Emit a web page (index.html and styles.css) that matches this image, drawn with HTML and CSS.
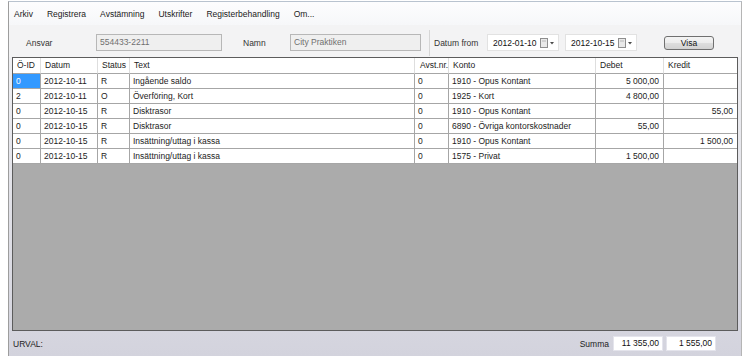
FILE: index.html
```html
<!DOCTYPE html>
<html lang="sv">
<head>
<meta charset="utf-8">
<title>Kassabok</title>
<link rel="stylesheet" href="styles.css">
</head>
<body>
<div class="window">
  <nav class="menubar">
    <span class="menu-item">Arkiv</span>
    <span class="menu-item">Registrera</span>
    <span class="menu-item">Avstämning</span>
    <span class="menu-item">Utskrifter</span>
    <span class="menu-item">Registerbehandling</span>
    <span class="menu-item">Om...</span>
  </nav>
  <div class="toolbar">
    <span class="lbl lbl-ansvar">Ansvar</span>
    <div class="field f-ansvar">554433-2211</div>
    <span class="lbl lbl-namn">Namn</span>
    <div class="field f-namn">City Praktiken</div>
    <div class="sep"></div>
    <span class="lbl lbl-datum">Datum from</span>
    <div class="date d1"><span>2012-01-10</span>
      <svg class="cal" width="15" height="10" viewBox="0 0 15 10"><rect x="0.5" y="0.5" width="7" height="9" fill="#e9e9e9" stroke="#8e8e8e"/><line x1="2" y1="3" x2="6" y2="3" stroke="#b8b8b8"/><path d="M10 4 L14 4 L12 6.5 Z" fill="#4a4a4a"/></svg>
    </div>
    <div class="date d2"><span>2012-10-15</span>
      <svg class="cal" width="15" height="10" viewBox="0 0 15 10"><rect x="0.5" y="0.5" width="7" height="9" fill="#e9e9e9" stroke="#8e8e8e"/><line x1="2" y1="3" x2="6" y2="3" stroke="#b8b8b8"/><path d="M10 4 L14 4 L12 6.5 Z" fill="#4a4a4a"/></svg>
    </div>
    <button class="btn">Visa</button>
  </div>
  <div class="content">
    <div class="grid">
      <div class="row head">
        <div class="cell">Ö-ID</div>
        <div class="cell">Datum</div>
        <div class="cell">Status</div>
        <div class="cell">Text</div>
        <div class="cell avst">Avst.nr.</div>
        <div class="cell">Konto</div>
        <div class="cell">Debet</div>
        <div class="cell">Kredit</div>
      </div>
      <div class="row">
        <div class="cell sel">0</div>
        <div class="cell">2012-10-11</div>
        <div class="cell">R</div>
        <div class="cell">Ingående saldo</div>
        <div class="cell">0</div>
        <div class="cell">1910 - Opus Kontant</div>
        <div class="cell num">5 000,00</div>
        <div class="cell num"></div>
      </div>
      <div class="row">
        <div class="cell">2</div>
        <div class="cell">2012-10-11</div>
        <div class="cell">O</div>
        <div class="cell">Överföring, Kort</div>
        <div class="cell">0</div>
        <div class="cell">1925 - Kort</div>
        <div class="cell num">4 800,00</div>
        <div class="cell num"></div>
      </div>
      <div class="row">
        <div class="cell">0</div>
        <div class="cell">2012-10-15</div>
        <div class="cell">R</div>
        <div class="cell">Disktrasor</div>
        <div class="cell">0</div>
        <div class="cell">1910 - Opus Kontant</div>
        <div class="cell num"></div>
        <div class="cell num">55,00</div>
      </div>
      <div class="row">
        <div class="cell">0</div>
        <div class="cell">2012-10-15</div>
        <div class="cell">R</div>
        <div class="cell">Disktrasor</div>
        <div class="cell">0</div>
        <div class="cell">6890 - Övriga kontorskostnader</div>
        <div class="cell num">55,00</div>
        <div class="cell num"></div>
      </div>
      <div class="row">
        <div class="cell">0</div>
        <div class="cell">2012-10-15</div>
        <div class="cell">R</div>
        <div class="cell">Insättning/uttag i kassa</div>
        <div class="cell">0</div>
        <div class="cell">1910 - Opus Kontant</div>
        <div class="cell num"></div>
        <div class="cell num">1 500,00</div>
      </div>
      <div class="row">
        <div class="cell">0</div>
        <div class="cell">2012-10-15</div>
        <div class="cell">R</div>
        <div class="cell">Insättning/uttag i kassa</div>
        <div class="cell">0</div>
        <div class="cell">1575 - Privat</div>
        <div class="cell num">1 500,00</div>
        <div class="cell num"></div>
      </div>
    </div>
  </div>
  <div class="statusbar">
    <span class="urval">URVAL:</span>
    <span class="summa">Summa</span>
    <div class="sumbox">11 355,00</div>
    <div class="sumbox">1 555,00</div>
  </div>
</div>
</body>
</html>
```
FILE: styles.css
```css
* { box-sizing: border-box; }
html, body { margin: 0; padding: 0; }
body {
  width: 745px;
  height: 356px;
  overflow: hidden;
  background: #ffffff;
  font-family: "Liberation Sans", Arial, sans-serif;
  font-size: 8.5px;
  color: #1c1c1c;
}
.window {
  margin: 1px 0 0 8px;
  width: 734px;
  height: 355px;
  border-top: 1px solid #b9c3cf;
  border-left: 1px solid #9d9d9d;
  border-right: 1px solid #b5b5b5;
  background: linear-gradient(#f5f5f6 0, #ececf0 25%, #d3d3dd 100%);
  display: flex;
  flex-direction: column;
}
.menubar {
  height: 23px;
  display: flex;
  align-items: center;
  gap: 14px;
  padding-left: 5px;
  background: linear-gradient(#fdfdfe, #f6f7f9);
}
.menu-item { color: #1a1a1a; }
.toolbar {
  height: 32px;
  display: flex;
  align-items: center;
  padding-left: 17px;
  padding-top: 3px;
  background: #f3f3f4;
}
.lbl { color: #333; }
.lbl-ansvar { width: 70px; }
.lbl-namn { width: 47px; margin-left: 21px; }
.lbl-datum { width: 53px; margin-left: 4px; }
.field {
  height: 17px;
  border: 1px solid #b7b7b7;
  background: #efefef;
  color: #707070;
  padding-left: 3px;
  line-height: 15px;
}
.f-ansvar { width: 126px; }
.f-namn { width: 131px; }
.sep {
  width: 1px;
  height: 26px;
  margin-left: 8px;
  background: #d6d6d6;
}
.date {
  width: 72px;
  height: 17px;
  display: flex;
  align-items: center;
  justify-content: space-between;
  padding: 0 3px 0 5px;
  background: #fff;
  border: 1px solid #e2e2e2;
  color: #111;
}
.d2 { margin-left: 6px; }
.cal { display: block; }
.btn {
  margin-left: 27px;
  width: 50px;
  height: 14px;
  padding: 0;
  border: 1px solid #707070;
  border-radius: 3px;
  background: linear-gradient(#f4f4f4, #ececec 50%, #dedede 50%, #d2d2d2);
  font-family: inherit;
  font-size: 8.5px;
  color: #111;
  line-height: 12px;
}
.content {
  height: 274px;
  padding: 0 3px;
}
.grid {
  width: 726px;
  height: 274px;
  border: 1px solid #5c5c5c;
  background: #ababab;
}
.row {
  display: grid;
  grid-template-columns: 28px 57px 32px 285px 34px 147px 68px 73px;
  height: 15px;
  background: #fff;
}
.row.head { height: 16px; }
.cell {
  border-right: 1px solid #a6a6a6;
  border-bottom: 1px solid #a6a6a6;
  padding: 0 3px;
  line-height: 14px;
  white-space: nowrap;
  overflow: hidden;
}
.cell:last-child { border-right: none; }
.head .cell {
  padding-left: 4px;
  line-height: 15px;
  border-right-color: #dedede;
  color: #222;
}
.head .avst { padding-left: 5px; }
.num { text-align: right; padding-right: 4px; }
.sel { background: #3399ff; color: #fff; }
.statusbar {
  height: 25px;
  display: flex;
  align-items: center;
  padding: 0 25px 0 4px;
}
.urval { color: #222; }
.summa { margin-left: auto; margin-right: 4px; color: #222; }
.sumbox {
  width: 50px;
  height: 15px;
  background: #fff;
  border: 1px solid #e4e4ec;
  text-align: right;
  padding-right: 3px;
  line-height: 13px;
  color: #111;
}
.sumbox + .sumbox { margin-left: 3px; }
```
